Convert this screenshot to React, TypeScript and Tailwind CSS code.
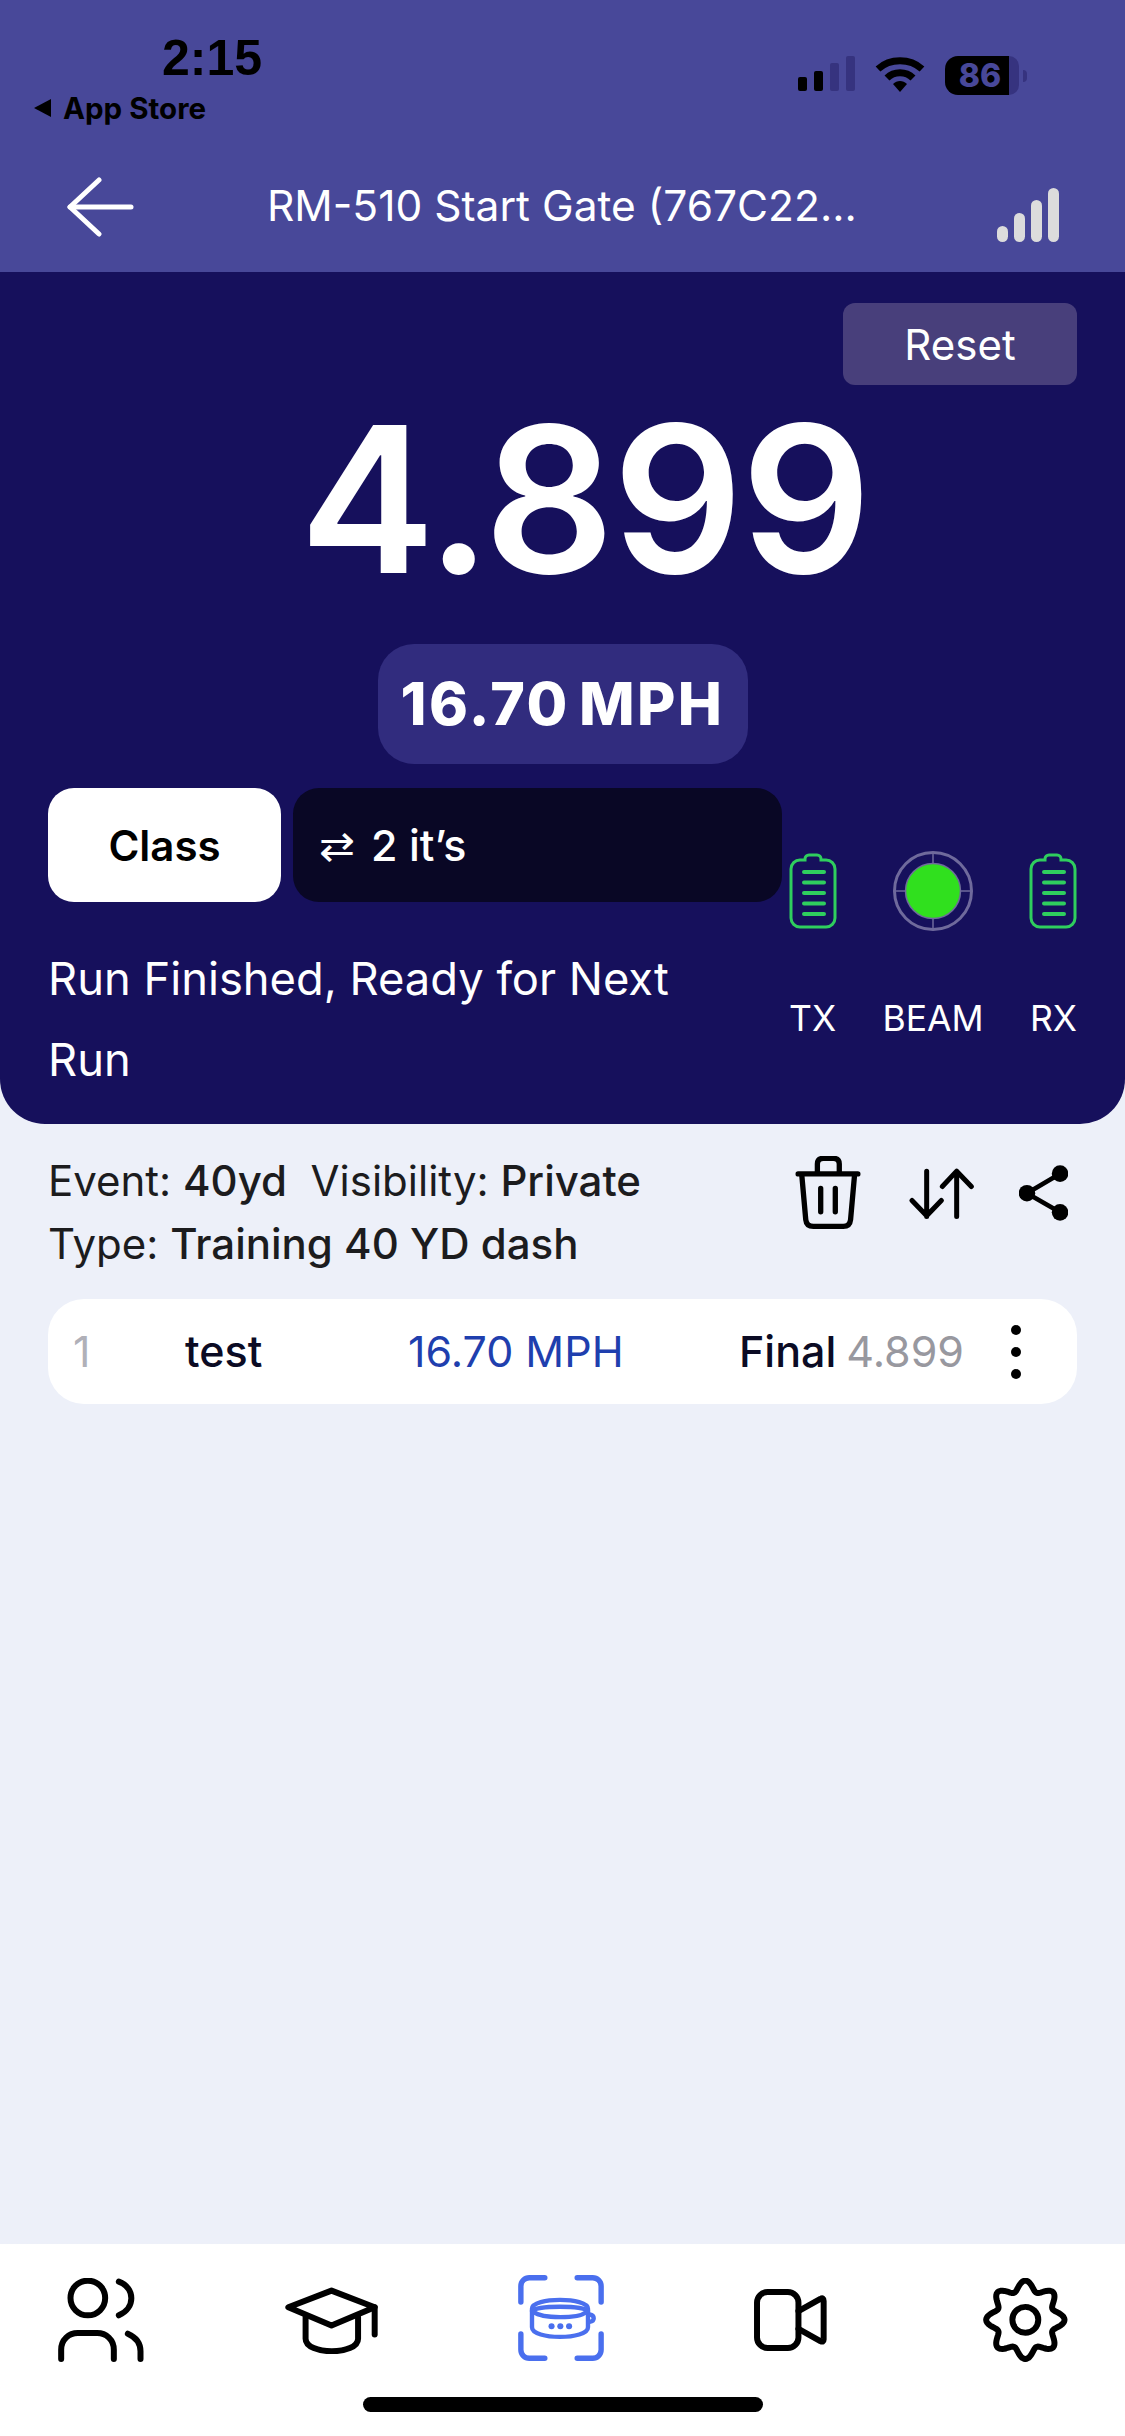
const cellBars = [
  { h: 'h-[14px]', tone: 'bg-black' },
  { h: 'h-[20px]', tone: 'bg-black' },
  { h: 'h-[28px]', tone: 'bg-[#36337f]' },
  { h: 'h-[35px]', tone: 'bg-[#36337f]' },
]

const linkBars = ['h-[16px]', 'h-[29px]', 'h-[42px]', 'h-[54px]']

// wavy outline of the settings cog
const gearPath =
  Array.from({ length: 160 }, (_, i) => {
    const a = (i / 160) * Math.PI * 2
    const r = 103 + 15 * Math.cos(8 * a)
    const x = 852 + r * Math.sin(a)
    const y = 181 - r * Math.cos(a)
    return `${i === 0 ? 'M' : 'L'}${x.toFixed(1)} ${y.toFixed(1)}`
  }).join(' ') + ' Z'

function BackArrow() {
  return (
    <svg width="68" height="60" viewBox="0 0 68 60" fill="none" stroke="white" strokeWidth="5" strokeLinecap="round" strokeLinejoin="round">
      <path d="M4 30H65" />
      <path d="M33 3L4 30L33 57" />
    </svg>
  )
}

function WifiIcon() {
  return (
    <svg width="50" height="37" viewBox="0 0 50 37" fill="none">
      <path d="M3 13C15 2 35 2 47 13" stroke="black" strokeWidth="7" />
      <path d="M12 22C19 15 31 15 38 22" stroke="black" strokeWidth="7" />
      <path d="M18 28C22 24 28 24 32 28L25 36Z" fill="black" />
    </svg>
  )
}

function BatteryIcon() {
  return (
    <svg width="48" height="76" viewBox="0 0 48 76" fill="none">
      <path
        d="M16 7V6a4 4 0 0 1 4-4h8a4 4 0 0 1 4 4v1h5a9 9 0 0 1 9 9v49a9 9 0 0 1-9 9H11a9 9 0 0 1-9-9V16a9 9 0 0 1 9-9Z"
        stroke="#2fce5e"
        strokeWidth="3"
      />
      {[20, 30.5, 41, 51.5, 62].map((y) => (
        <path key={y} d="M15 0H35" transform={`translate(0 ${y - 1})`} stroke="#2fce5e" strokeWidth="4" strokeLinecap="round" />
      ))}
    </svg>
  )
}

function BeamIcon() {
  return (
    <svg width="80" height="80" viewBox="0 0 80 80" fill="none">
      <circle cx="40" cy="40" r="38.5" stroke="#6f6a9c" strokeWidth="3" />
      <path d="M40 1V13M40 67V79M1 40H13M67 40H79" stroke="#6f6a9c" strokeWidth="1.5" />
      <circle cx="40" cy="40" r="27.5" fill="#30e01e" stroke="#6f6a9c" strokeWidth="1.5" />
    </svg>
  )
}

function TrashIcon() {
  return (
    <svg width="66" height="73" viewBox="45 48 198 220" fill="none" stroke="black" strokeWidth="16" strokeLinecap="round" strokeLinejoin="round">
      <path d="M54 102H234" />
      <path d="M112 100V72Q112 55 130 55H160Q178 55 178 72V100" />
      <path d="M65 105L77 240Q79 260 100 260H190Q210 260 212 240L224 105" />
      <path d="M122 146V216M166 146V216" />
    </svg>
  )
}

function SortIcon() {
  return (
    <svg width="65" height="51" viewBox="388 83 195 152" fill="none" stroke="black" strokeWidth="15" strokeLinecap="round" strokeLinejoin="round">
      <path d="M441 92V228M397 180L441 226L485 180" />
      <path d="M531 92V228M488 138L531 92L575 138" />
    </svg>
  )
}

function ShareIcon() {
  return (
    <svg width="49" height="56" viewBox="718 75 148 167" fill="black" stroke="black">
      <path d="M842 100L742 159L842 217" fill="none" strokeWidth="14" />
      <g stroke="none">
        <circle cx="842" cy="100" r="25" />
        <circle cx="742" cy="159" r="25" />
        <circle cx="842" cy="217" r="25" />
      </g>
    </svg>
  )
}

function UsersIcon() {
  return (
    <svg width="87" height="85" viewBox="50 55 260 255" fill="none" stroke="black" strokeWidth="18" strokeLinecap="round" strokeLinejoin="round">
      <circle cx="142" cy="115" r="52" />
      <path d="M235 66C285 85 285 145 235 167" />
      <path d="M62 298V270C62 240 85 220 112 220H170C197 220 220 240 220 270V298" />
      <path d="M262 222C285 232 300 250 300 275V298" />
    </svg>
  )
}

function CapIcon() {
  return (
    <svg width="93" height="67" viewBox="735 80 280 200" fill="none" stroke="black" strokeWidth="18" strokeLinecap="round" strokeLinejoin="round">
      <path d="M875 90L1005 140L875 195L745 140Z" />
      <path d="M1005 140V222" />
      <path d="M797 170V235C797 285 955 285 955 235V170" />
    </svg>
  )
}

function CollarIcon() {
  return (
    <svg width="86" height="86" viewBox="118 75 254 255" fill="none" stroke="#4a6fee" strokeLinecap="round">
      <g strokeWidth="16">
        <path d="M126 155V108a25 25 0 0 1 25-25h46" />
        <path d="M293 83h46a25 25 0 0 1 25 25v47" />
        <path d="M126 250v47a25 25 0 0 0 25 25h46" />
        <path d="M293 322h46a25 25 0 0 0 25-25v-47" />
      </g>
      <g strokeWidth="13">
        <path d="M159 175C159 140 325 140 325 175V230C325 268 159 268 159 230Z" />
        <path d="M159 182C175 165 309 165 325 182" />
        <path d="M164 185C190 205 295 205 320 185" />
        <path d="M330 192C346 195 346 212 330 214" />
      </g>
      <g fill="#4a6fee" stroke="none">
        <circle cx="217" cy="227" r="9" />
        <circle cx="243" cy="227" r="9" />
        <circle cx="269" cy="227" r="9" />
      </g>
    </svg>
  )
}

function VideoIcon() {
  return (
    <svg width="73" height="62" viewBox="42 88 220 187" fill="none" stroke="black" strokeWidth="18" strokeLinecap="round" strokeLinejoin="round">
      <rect x="51" y="97" width="125" height="169" rx="32" />
      <path d="M176 155L242 118Q252 112 252 124V240Q252 250 242 245L176 208" />
    </svg>
  )
}

function GearIcon() {
  return (
    <svg width="85" height="84" viewBox="725 55 255 253" fill="none" stroke="black" strokeWidth="18" strokeLinejoin="round">
      <path d={gearPath} />
      <circle cx="852" cy="181" r="39" />
    </svg>
  )
}

export default function App() {
  return (
    <div className="w-[1125px] h-[2436px] flex flex-col bg-[#edf0f9] font-['Inter',sans-serif] overflow-hidden">
      {/* Status bar + nav */}
      <div className="h-[272px] shrink-0 bg-[#484899] flex flex-col">
        <div className="h-[138px] flex justify-between">
          <div className="pl-[34px] pt-[30px]">
            <div className="pl-[128px] text-[50px] leading-[56px] font-bold text-black font-['Liberation_Sans',sans-serif]">2:15</div>
            <div className="flex items-center gap-[12px] mt-[6px]">
              <div className="w-0 h-0 border-y-[9px] border-y-transparent border-r-[17px] border-r-black" />
              <span className="text-[29.5px] leading-[32px] font-bold text-black">App Store</span>
            </div>
          </div>
          <div className="flex items-start pt-[56px] pr-[98px]">
            <div className="flex items-end gap-[7px] h-[37px] pb-[2px]">
              {cellBars.map((bar, i) => (
                <div key={i} className={`w-[9px] rounded-[2px] ${bar.h} ${bar.tone}`} />
              ))}
            </div>
            <div className="ml-[20px]">
              <WifiIcon />
            </div>
            <div className="ml-[20px] w-[82px] h-[39px] flex items-center">
              <div className="w-[64px] h-[39px] bg-black rounded-l-[13px] flex items-center justify-center pl-[6px]">
                <span className="text-[32px] leading-none font-extrabold text-[#484899]">86</span>
              </div>
              <div className="w-[10px] h-[39px] bg-[#36337f] rounded-r-[10px]" />
              <div className="w-[4px] h-[12px] ml-[4px] bg-[#36337f] rounded-r-[4px] shrink-0" />
            </div>
          </div>
        </div>
        <div className="flex-1 flex items-start">
          <div className="w-[267px] pl-[66px] pt-[39px]">
            <BackArrow />
          </div>
          <div className="pt-[42px] w-[600px] text-[42.5px] leading-[52px] text-white whitespace-nowrap">RM-510 Start Gate (767C22...</div>
          <div className="flex items-end gap-[6px] ml-[130px] h-[54px] mt-[50px]">
            {linkBars.map((h) => (
              <div key={h} className={`w-[11px] rounded-full bg-[#dcdcdc] ${h}`} />
            ))}
          </div>
        </div>
      </div>

      {/* Timer panel */}
      <div className="h-[852px] shrink-0 bg-[#16105c] rounded-b-[45px] px-[48px] pt-[31px] flex flex-col">
        <div className="flex justify-end">
          <button className="w-[234px] h-[82px] rounded-[12px] bg-[#483f7b] text-white text-[42px]">Reset</button>
        </div>
        <div className="text-center text-white font-semibold text-[204px] leading-[230px] -mt-[1px] pl-[44px] tracking-[-2px]">4.899</div>
        <div className="flex justify-center mt-[30px]">
          <div className="w-[370px] h-[120px] rounded-[36px] bg-[#312c7e] flex items-center justify-center text-white font-extrabold text-[59px] tracking-[2.4px] [word-spacing:-6px]">
            16.70 MPH
          </div>
        </div>
        <div className="flex mt-[24px]">
          <div className="w-[734px]">
            <div className="flex gap-[12px]">
              <div className="w-[233px] h-[114px] rounded-[26px] bg-white flex items-center justify-center text-black font-semibold text-[42px]">Class</div>
              <div className="w-[489px] h-[114px] rounded-[26px] bg-[#090725] flex items-center pl-[26px] text-white font-medium text-[43px]">
                <span className="w-[52px]">⇄</span>
                <span>2 it’s</span>
              </div>
            </div>
            <div className="mt-[36px] w-[660px] text-white text-[45.3px] leading-[81px]">Run Finished, Ready for Next Run</div>
          </div>
          <div className="flex-1 pl-[7px] pt-[63px]">
            <div className="flex items-start justify-between">
              <div className="pt-[2px]"><BatteryIcon /></div>
              <div className="-ml-[1px]"><BeamIcon /></div>
              <div className="pt-[2px]"><BatteryIcon /></div>
            </div>
            <div className="flex justify-between mt-[68px] text-white text-[35.5px] leading-[40px]">
              <span>TX</span>
              <span>BEAM</span>
              <span>RX</span>
            </div>
          </div>
        </div>
      </div>

      {/* Session info */}
      <div className="flex-1 px-[48px]">
        <div className="flex justify-between pt-[25px]">
          <div className="text-[42px] leading-[63px] text-[#1c1c1e]">
            <div className="whitespace-pre">
              Event: <span className="font-medium">40yd</span>{'  '}Visibility: <span className="font-medium">Private</span>
            </div>
            <div>
              Type: <span className="font-medium">Training 40 YD dash</span>
            </div>
          </div>
          <div className="flex items-start pt-[7px] pr-[9px]">
            <TrashIcon />
            <div className="ml-[48px] mt-[12px]"><SortIcon /></div>
            <div className="ml-[45px] mt-[9px]"><ShareIcon /></div>
          </div>
        </div>
        <div className="mt-[24px] h-[105px] rounded-[36px] bg-white flex items-center text-[43px]">
          <span className="w-[137px] pl-[25px] text-[#b0b0b8]">1</span>
          <span className="w-[223px] font-medium text-[#0b0b24]">test</span>
          <span className="w-[331px] text-[#1f3fae]">16.70 MPH</span>
          <span className="font-medium text-[#0b0b24]">Final</span>
          <span className="ml-[10px] text-[#98989f]">4.899</span>
          <div className="ml-[47px] flex flex-col gap-[12px]">
            <div className="w-[10px] h-[10px] rounded-full bg-black" />
            <div className="w-[10px] h-[10px] rounded-full bg-black" />
            <div className="w-[10px] h-[10px] rounded-full bg-black" />
          </div>
        </div>
      </div>

      {/* Tab bar */}
      <div className="h-[192px] shrink-0 bg-white flex flex-col">
        <div className="h-[153px] flex items-start pl-[57px]">
          <div className="mt-[34px]"><UsersIcon /></div>
          <div className="mt-[43px] ml-[141px]"><CapIcon /></div>
          <div className="mt-[31px] ml-[140px]"><CollarIcon /></div>
          <div className="mt-[45px] ml-[150px]"><VideoIcon /></div>
          <div className="mt-[34px] ml-[156px]"><GearIcon /></div>
        </div>
        <div className="mx-auto w-[400px] h-[15px] rounded-full bg-black" />
      </div>
    </div>
  )
}
